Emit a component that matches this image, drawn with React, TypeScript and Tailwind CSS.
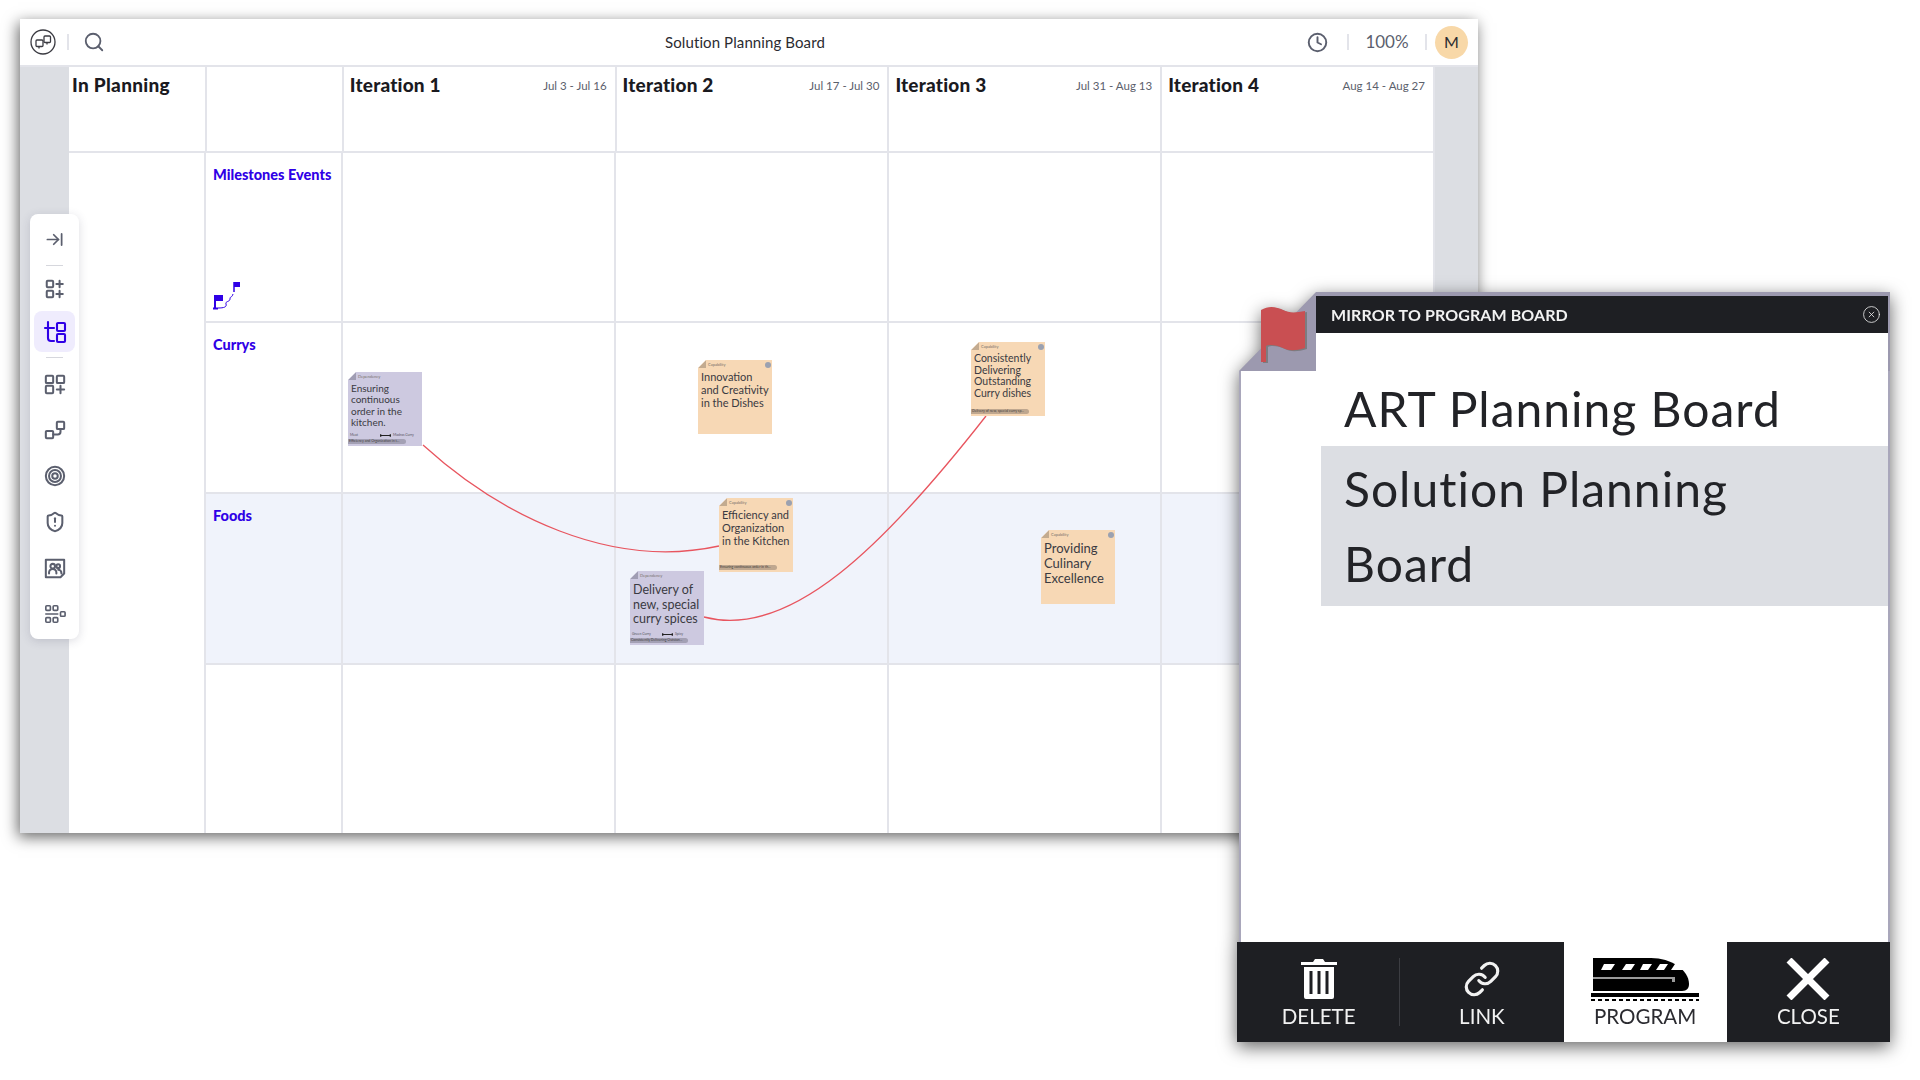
import { ArrowRightToLine, CircleX, Clock, Link, Search, ShieldAlert } from "lucide-react";

const columns = [
  { name: "Iteration 1", dates: "Jul 3 - Jul 16" },
  { name: "Iteration 2", dates: "Jul 17 - Jul 30" },
  { name: "Iteration 3", dates: "Jul 31 - Aug 13" },
  { name: "Iteration 4", dates: "Aug 14 - Aug 27" },
];

const lanes = [
  { name: "Milestones Events", rowClass: "h-[170px]", bg: "bg-white" },
  { name: "Currys", rowClass: "h-[171px]", bg: "bg-white" },
  { name: "Foods", rowClass: "h-[171px]", bg: "bg-[#f0f3fb]" },
  { name: "", rowClass: "h-[168px]", bg: "bg-white" },
];

interface Note {
  place: string;
  text: string;
  textClass: string;
  kind: "Capability" | "Dependency";
  dot?: boolean;
  pill?: string;
  from?: string;
  to?: string;
}

const notes: Note[] = [
  {
    place: "left-[348px] top-[372px]",
    text: "Ensuring continuous order in the kitchen.",
    textClass: "text-[10px] leading-[11.3px]",
    kind: "Dependency",
    pill: "Efficiency and Organization in t...",
    from: "Meat",
    to: "Madras Curry",
  },
  {
    place: "left-[698px] top-[360px]",
    text: "Innovation and Creativity in the Dishes",
    textClass: "text-[11px] leading-[12.8px]",
    kind: "Capability",
    dot: true,
  },
  {
    place: "left-[971px] top-[342px]",
    text: "Consistently Delivering Outstanding Curry dishes",
    textClass: "text-[10.5px] leading-[11.6px]",
    kind: "Capability",
    dot: true,
    pill: "Delivery of new, special curry sp...",
  },
  {
    place: "left-[719px] top-[498px]",
    text: "Efficiency and Organization in the Kitchen",
    textClass: "text-[11px] leading-[12.8px]",
    kind: "Capability",
    dot: true,
    pill: "Ensuring continuous order in th...",
  },
  {
    place: "left-[630px] top-[571px]",
    text: "Delivery of new, special curry spices",
    textClass: "mt-[1px] text-[12.5px] leading-[14.5px]",
    kind: "Dependency",
    pill: "Consistently Delivering Outstan...",
    from: "Green Curry",
    to: "Spicy",
  },
  {
    place: "left-[1041px] top-[530px]",
    text: "Providing Culinary Excellence",
    textClass: "text-[13px] leading-[15px]",
    kind: "Capability",
    dot: true,
  },
];

const StickyNote = ({ note }: { note: Note }) => {
  const isCapability = note.kind === "Capability";
  return (
    <div
      className={`absolute ${note.place} flex h-[74px] w-[74px] flex-col text-[#3a3a42] [clip-path:polygon(8px_0,100%_0,100%_100%,0_100%,0_8px)] ${
        isCapability ? "bg-[#f7d8b5]" : "bg-[#cdc9e0]"
      }`}
    >
      <div
        className={`absolute left-0 top-0 h-[8px] w-[8px] [clip-path:polygon(100%_0,100%_100%,0_100%)] ${
          isCapability ? "bg-[#c3ab90]" : "bg-[#a09db3]"
        }`}
      />
      <div className="flex h-[10px] items-center justify-between pl-[10px] pr-[1px] text-[4px] text-[#77706a]">
        <span>{note.kind}</span>
        {note.dot && <span className="h-[6px] w-[6px] rounded-full bg-[#9ba1b0]" />}
      </div>
      <div className={`px-[3px] pt-[1px] ${note.textClass}`}>{note.text}</div>
      <div className="mt-auto">
        {note.from && (
          <div className="flex items-center px-[2px] text-[3.5px] text-[#55535f]">
            <span className="w-[30px]">{note.from}</span>
            <svg width="11" height="3" viewBox="0 0 11 3" className="mr-[2px]">
              <path d="M0 0v3l2-1h7l2 1V0L9 1H2z" fill="#222" />
            </svg>
            <span className="whitespace-nowrap">{note.to}</span>
          </div>
        )}
        {note.pill && (
          <div
            className={`mb-[2px] mt-[1px] w-[58px] truncate rounded-r-full px-[1px] text-[3.5px] leading-[5px] text-[#403c3a] ${
              isCapability ? "bg-[#bfa78f]" : "bg-[#a3a0b4]"
            }`}
          >
            {note.pill}
          </div>
        )}
      </div>
    </div>
  );
};

const iconProps = {
  width: 22,
  height: 22,
  viewBox: "0 0 24 24",
  fill: "none",
  stroke: "currentColor",
  strokeWidth: 2.2,
  strokeLinecap: "round" as const,
  strokeLinejoin: "round" as const,
};

const RowsPlusIcon = () => (
  <svg {...iconProps}>
    <rect x="3" y="3" width="7" height="7" rx="1" />
    <rect x="3" y="14" width="7" height="7" rx="1" />
    <path d="M17 3v7M13.5 6.5h7M17 14v7M13.5 17.5h7" />
  </svg>
);

const TreeIcon = () => (
  <svg {...iconProps} width={24} height={24} strokeWidth={2.1}>
    <path d="M5 2v16a3 3 0 0 0 3 3h3M2 8h9" />
    <rect x="14" y="3" width="8" height="8" rx="1" />
    <rect x="14" y="14" width="8" height="8" rx="1" />
  </svg>
);

const GridPlusIcon = () => (
  <svg {...iconProps}>
    <rect x="2" y="3" width="8" height="8" rx="1" />
    <rect x="14" y="3" width="8" height="8" rx="1" />
    <rect x="2" y="14" width="8" height="8" rx="1" />
    <path d="M18 14v8M14 18h8" />
  </svg>
);

const RouteIcon = () => (
  <svg {...iconProps}>
    <rect x="2" y="13" width="8" height="8" rx="1" />
    <rect x="14" y="3" width="8" height="8" rx="1" />
    <path d="M10 17h5a3 3 0 0 0 3-3v-3" />
  </svg>
);

const TargetIcon = () => (
  <svg {...iconProps}>
    <circle cx="12" cy="12" r="10" />
    <circle cx="12" cy="12" r="6.5" />
    <circle cx="12" cy="12" r="3" />
  </svg>
);

const TeamCardIcon = () => (
  <svg {...iconProps}>
    <path d="M2 3h20v15l-4 4H2z" />
    <circle cx="9.5" cy="10" r="2.5" />
    <circle cx="15.5" cy="10" r="2" />
    <path d="M5.5 18v-1a4 4 0 0 1 8 0v1M15.5 14a3.500 3.500 0 0 1 3.500 3.500v.5" />
  </svg>
);

const BoardIcon = () => (
  <svg {...iconProps} strokeWidth={1.8}>
    <rect x="2" y="3" width="5" height="5" rx="1" />
    <rect x="10" y="3" width="5" height="5" rx="1" />
    <path d="M2 12h13" />
    <rect x="2" y="16" width="5" height="5" rx="1" />
    <rect x="10" y="16" width="5" height="5" rx="1" />
    <rect x="18" y="9.500" width="5" height="5" rx="1" />
  </svg>
);

const Sidebar = () => (
  <div className="absolute left-[30px] top-[214px] flex h-[425px] w-[49px] flex-col items-center rounded-lg bg-white text-[#5b5f6e] shadow-[0_2px_10px_rgba(60,60,90,0.18)]">
    <div className="flex h-[51px] shrink-0 items-center justify-center">
      <ArrowRightToLine size={19} strokeWidth={2.2} />
    </div>
    <div className="h-[1px] w-[17px] shrink-0 bg-[#d6d7dd]" />
    <div className="flex h-[45px] shrink-0 items-center justify-center">
      <RowsPlusIcon />
    </div>
    <div className="flex h-[41px] w-[41px] shrink-0 items-center justify-center rounded-lg bg-[#efecfd] text-[#2f00e6]">
      <TreeIcon />
    </div>
    <div className="mt-[5px] h-[1px] w-[17px] shrink-0 bg-[#d6d7dd]" />
    <div className="flex h-[46px] shrink-0 items-center justify-center pt-[5px]"><GridPlusIcon /></div>
    <div className="flex h-[46px] shrink-0 items-center justify-center pt-[6px]"><RouteIcon /></div>
    <div className="flex h-[46px] shrink-0 items-center justify-center pt-[5px]"><TargetIcon /></div>
    <div className="flex h-[46px] shrink-0 items-center justify-center pt-[6px]"><ShieldAlert size={22} strokeWidth={2.2} /></div>
    <div className="flex h-[46px] shrink-0 items-center justify-center pt-[5px]"><TeamCardIcon /></div>
    <div className="flex h-[46px] shrink-0 items-center justify-center pt-[6px]"><BoardIcon /></div>
  </div>
);

const MilestoneIcon = () => (
  <svg width="28" height="30" viewBox="0 0 28 30" fill="none" className="text-[#2f00e6]">
    <rect x="3" y="15" width="8" height="6" fill="currentColor" />
    <path d="M3 15v13M1 28.500h5" stroke="currentColor" strokeWidth="2" />
    <rect x="22" y="2" width="6" height="5" fill="currentColor" />
    <path d="M22 2v10" stroke="currentColor" strokeWidth="1.500" />
    <path d="M6 28c6 0 9-1 8-4s4-2 4-5 2-1 3-5" stroke="currentColor" strokeWidth="1" />
  </svg>
);

const Board = () => (
  <div className="flex flex-1">
    <div className="w-[49px] bg-[#dcdee3]" />
    <div className="flex w-[1366px] flex-col">
      <div className="flex h-[86px] border-b-2 border-[#e3e4ea]">
        <div className="w-[138px] border-r-2 border-[#e3e4ea] pl-[3px] pt-[4px] text-[19px] font-black tracking-[0.3px] text-[#1a1a1f]">
          In Planning
        </div>
        <div className="w-[137px] border-r-2 border-[#e3e4ea]" />
        {columns.map((col) => (
          <div
            key={col.name}
            className="flex w-[273px] items-start justify-between border-r-2 border-[#e3e4ea] pl-[6px] pr-[8px] pt-[4px]"
          >
            <span className="text-[19px] font-black tracking-[0.2px] text-[#1a1a1f]">{col.name}</span>
            <span className="pt-[6px] text-[11.5px] text-[#5b606c]">{col.dates}</span>
          </div>
        ))}
      </div>
      <div className="flex flex-1">
        <div className="w-[138px] border-r-2 border-[#e3e4ea]" />
        <div className="flex-1">
          {lanes.map((lane) => (
            <div key={lane.name || "empty"} className={`flex ${lane.rowClass} ${lane.bg} border-b-2 border-[#e3e4ea] last:border-b-0`}>
              <div className="relative w-[137px] border-r-2 border-[#e3e4ea] pl-[7px] pt-[12px] text-[14.5px] font-black leading-[20px] text-[#2f00e6]">
                {lane.name}
                {lane.name === "Milestones Events" && (
                  <div className="absolute bottom-[11px] left-[6px]">
                    <MilestoneIcon />
                  </div>
                )}
              </div>
              {columns.map((col) => (
                <div key={col.name} className="w-[273px] border-r-2 border-[#e3e4ea]" />
              ))}
            </div>
          ))}
        </div>
      </div>
    </div>
    <div className="flex-1 bg-[#dcdee3]" />
  </div>
);

const Toolbar = () => (
  <div className="grid h-[48px] shrink-0 grid-cols-[1fr_auto_1fr] items-center border-b-2 border-[#e3e4ea] bg-white pl-[10px] pr-[10px] text-[#5b5f6e]">
    <div className="flex items-center">
      <svg width="26" height="26" viewBox="0 0 26 26" fill="none" stroke="#3b3b42" strokeWidth="1.300">
        <circle cx="13" cy="13" r="12" />
        <rect x="6" y="11" width="7" height="6.500" rx="1" />
        <path d="M9 17.500v2" />
        <rect x="14" y="7" width="6.500" height="6.500" rx="1" />
        <path d="M17 13.500v2" />
      </svg>
      <div className="ml-[11px] h-[16px] w-[2px] bg-[#e3e4ea]" />
      <Search size={22} strokeWidth={2} className="ml-[14px]" />
    </div>
    <div className="pr-[8px] text-[15px] tracking-[0.1px] text-[#2b2b30]">Solution Planning Board</div>
    <div className="flex items-center justify-end">
      <Clock size={21} strokeWidth={2.2} />
      <div className="ml-[19px] h-[16px] w-[2px] bg-[#e3e4ea]" />
      <span className="w-[76px] text-center text-[17px]">100%</span>
      <div className="h-[16px] w-[2px] bg-[#e3e4ea]" />
      <div className="ml-[8px] flex h-[33px] w-[33px] items-center justify-center rounded-full bg-[#f8d8a8] text-[16px] text-[#2b2b30]">
        M
      </div>
    </div>
  </div>
);

const TrainIcon = () => (
  <svg width="108" height="43" viewBox="0 0 108 43">
    <path d="M2 0h58c20 0 38 12 38 26 0 4-2 7-7 7H2z" fill="#000" />
    <path d="M10 12l3-6h11l-4 6zM31 12l4-6h9l-4 6zM49 12l3-6h9l-4 6zM65 12l4-6h8l-4 6zM80 12l4-6h6c3 1 6 4 8 6z" fill="#fff" />
    <rect x="2" y="19" width="81" height="2" fill="#9a9a9a" />
    <rect x="81" y="19" width="3" height="5" fill="#9a9a9a" />
    <rect x="0" y="35" width="108" height="4" fill="#000" />
    <path d="M0 42h108" stroke="#000" strokeWidth="2" strokeDasharray="4 3" />
  </svg>
);

const TrashIcon = () => (
  <svg width="36" height="42" viewBox="0 0 36 42">
    <path d="M0 4h12l2-3h8l2 3h12v3H0zM3 9h30v30a2 2 0 0 1-2 2H5a2 2 0 0 1-2-2z" fill="#fff" />
    <path d="M10 13v23M18 13v23M26 13v23" stroke="#1e1f23" strokeWidth="3" />
  </svg>
);

const CloseIcon = () => (
  <svg width="44" height="42" viewBox="0 0 44 42" stroke="#fff" strokeWidth="7">
    <path d="M3 2l38 38M41 2L3 40" />
  </svg>
);

const FooterButton = ({ label, active, icon, divider }: { label: string; active?: boolean; icon: React.ReactNode; divider?: boolean }) => (
  <div className={`relative flex flex-1 flex-col items-center pt-[15px] ${active ? "bg-white text-[#2b2b30]" : "text-[#f2f2f2]"}`}>
    <div className="flex h-[44px] items-center justify-center">{icon}</div>
    <span className="mt-[2px] text-[20.5px] leading-[26px]">{label}</span>
    {divider && <div className="absolute bottom-[16px] right-0 top-[16px] w-[1px] bg-[#3c3d42]" />}
  </div>
);

const MirrorDialog = () => (
  <div className="absolute left-[1237px] top-[292px] flex h-[750px] w-[653px] flex-col drop-shadow-[0_5px_9px_rgba(0,0,0,0.6)]">
    <div className="ml-[2px] flex h-[79px] shrink-0">
      <div className="w-[77px] bg-[#9c99af] [clip-path:polygon(100%_0,100%_100%,0_100%)]" />
      <div className="flex flex-1 flex-col bg-[#9c99af] pt-[4px] pr-[2px]">
        <div className="flex h-[37px] items-center justify-between bg-[#1e1f23] pl-[15px] pr-[7px] text-[16px] font-bold tracking-[0.1px] text-[#f2f2f2]">
          <span>MIRROR TO PROGRAM BOARD</span>
          <CircleX size={19} strokeWidth={1} />
        </div>
        <div className="flex-1 bg-white" />
      </div>
    </div>
    <div className="ml-[2px] flex-1 border-x-2 border-[#a9a7bb] bg-white pl-[80px] text-[48px] leading-[75px] tracking-[1px] text-[#222327]">
      <div className="h-[75px] pl-[23px]">ART Planning Board</div>
      <div className="bg-[#dcdee3] py-[5px] pl-[23px] pr-[60px]">Solution Planning Board</div>
    </div>
    <div className="flex h-[100px] shrink-0 bg-[#1e1f23]">
      <FooterButton label="DELETE" icon={<TrashIcon />} divider />
      <FooterButton label="LINK" icon={<Link size={38} strokeWidth={2} />} />
      <FooterButton label="PROGRAM" icon={<TrainIcon />} active />
      <FooterButton label="CLOSE" icon={<CloseIcon />} />
    </div>
    <svg className="absolute left-[22px] top-[12px]" width="50" height="60" viewBox="0 0 50 60">
      <path d="M2 6c8-5 16-3 22 0s12 3 22 1v37c-10 3-16 3-22 0S10 40 7 42v16H2z" fill="#7c7c80" transform="translate(2 1)" />
      <path d="M2 6c8-5 16-3 22 0s12 3 22 1v37c-10 3-16 3-22 0S10 40 7 42v16H2z" fill="#c94f52" />
    </svg>
  </div>
);

export default function App() {
  return (
    <div className="relative h-screen w-full overflow-hidden bg-white font-['Lato',sans-serif]">
      <div className="ml-[20px] mt-[19px] flex h-[814px] w-[1458px] flex-col bg-white shadow-[-2px_4px_14px_rgba(0,0,0,0.6)]">
        <Toolbar />
        <Board />
      </div>
      <Sidebar />
      <svg className="absolute left-0 top-0" width="1920" height="1080" fill="none" stroke="#e8555f" strokeWidth="1.300">
        <path d="M423 445C500 515 610 570 719 546" />
        <path d="M704 617C790 640 885 545 986 416" />
      </svg>
      {notes.map((note) => (
        <StickyNote key={note.text} note={note} />
      ))}
      <MirrorDialog />
    </div>
  );
}
